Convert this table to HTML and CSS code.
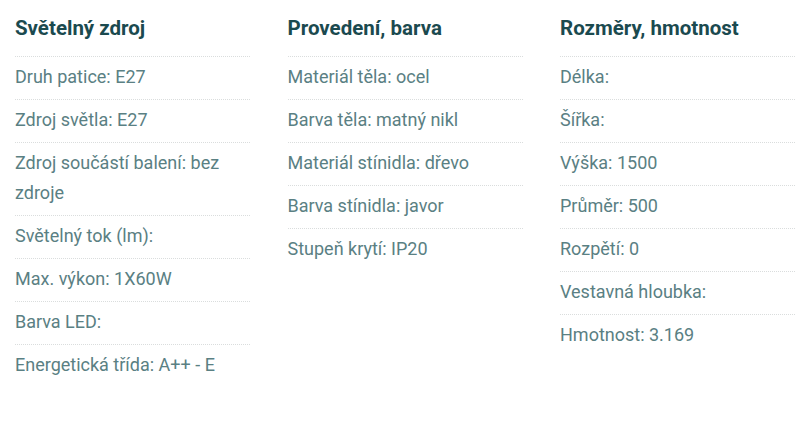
FILE: index.html
```html
<!DOCTYPE html>
<html lang="cs">
<head>
<meta charset="utf-8">
<title>Parametry</title>
<link rel="stylesheet" href="styles.css">
</head>
<body>
<div class="params">
  <section class="col">
    <h3 class="col-title">Světelný zdroj</h3>
    <ul class="rows">
      <li>Druh patice: E27</li>
      <li>Zdroj světla: E27</li>
      <li>Zdroj součástí balení: bez zdroje</li>
      <li>Světelný tok (lm):</li>
      <li>Max. výkon: 1X60W</li>
      <li>Barva LED:</li>
      <li>Energetická třída: A++ - E</li>
    </ul>
  </section>
  <section class="col">
    <h3 class="col-title">Provedení, barva</h3>
    <ul class="rows">
      <li>Materiál těla: ocel</li>
      <li>Barva těla: matný nikl</li>
      <li>Materiál stínidla: dřevo</li>
      <li>Barva stínidla: javor</li>
      <li>Stupeň krytí: IP20</li>
    </ul>
  </section>
  <section class="col">
    <h3 class="col-title">Rozměry, hmotnost</h3>
    <ul class="rows">
      <li>Délka:</li>
      <li>Šířka:</li>
      <li>Výška: 1500</li>
      <li>Průměr: 500</li>
      <li>Rozpětí: 0</li>
      <li>Vestavná hloubka:</li>
      <li>Hmotnost: 3.169</li>
    </ul>
  </section>
</div>
</body>
</html>
```
FILE: styles.css
```css
html, body {
  margin: 0;
  padding: 0;
  background: #ffffff;
}
body {
  font-family: Roboto, "Liberation Sans", sans-serif;
}
.params {
  display: grid;
  grid-template-columns: 235px 235px 235px;
  column-gap: 37.5px;
  padding: 0 0 0 15px;
  align-items: start;
}
.col-title {
  margin: 0;
  padding: 13px 0 13px;
  font-size: 20.5px;
  line-height: 30px;
  font-weight: 700;
  color: #1b4a4f;
}
.rows {
  list-style: none;
  margin: 0;
  padding: 0;
}
.rows li {
  border-top: 1px dotted #dadddd;
  padding: 5px 0 7px;
  font-size: 18px;
  font-weight: 400;
  line-height: 30px;
  color: #5a8083;
}
```
